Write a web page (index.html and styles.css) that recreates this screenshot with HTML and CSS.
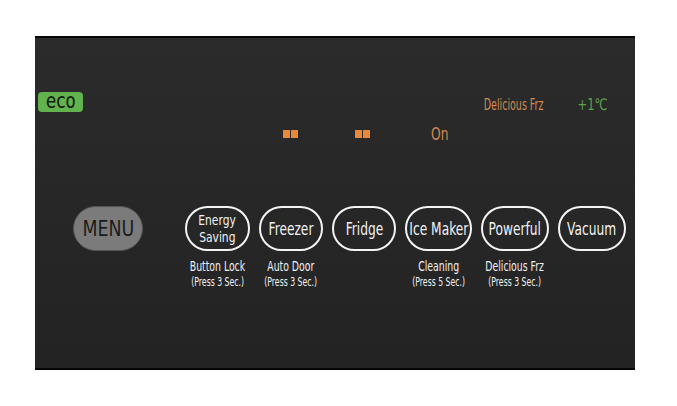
FILE: index.html
```html
<!DOCTYPE html>
<html lang="en">
  <head>
    <meta charset="UTF-8" />
    <title>Control Panel</title>
    <link rel="stylesheet" href="styles.css">
  </head>
  <body>
    <div class="panel">
      <div class="status-row">
        <span class="eco"><span class="cn">eco</span></span>
        <div class="status-right">
          <span class="status-mode cn">Delicious Frz</span>
          <span class="status-temp cn">+1&#8451;</span>
        </div>
      </div>

      <div class="indicator-row">
        <span class="dots"><i></i><i></i></span>
        <span class="dots"><i></i><i></i></span>
        <span class="on-text cn">On</span>
      </div>

      <div class="button-row">
        <div class="menu-btn"><span class="cn">MENU</span></div>
        <div class="keys">
          <div class="key-col" style="width: 65px">
            <div class="key key-two">
              <span class="cn">Energy</span>
              <span class="cn">Saving</span>
            </div>
            <div class="key-sub">
              <span class="cn">Button Lock</span>
              <small class="cn">(Press 3 Sec.)</small>
            </div>
          </div>
          <div class="key-col" style="width: 64px">
            <div class="key"><span class="cn">Freezer</span></div>
            <div class="key-sub">
              <span class="cn">Auto Door</span>
              <small class="cn">(Press 3 Sec.)</small>
            </div>
          </div>
          <div class="key-col" style="width: 64px">
            <div class="key"><span class="cn">Fridge</span></div>
          </div>
          <div class="key-col" style="width: 67px">
            <div class="key"><span class="cn">Ice Maker</span></div>
            <div class="key-sub">
              <span class="cn">Cleaning</span>
              <small class="cn">(Press 5 Sec.)</small>
            </div>
          </div>
          <div class="key-col" style="width: 68px">
            <div class="key"><span class="cn">Powerful</span></div>
            <div class="key-sub">
              <span class="cn">Delicious Frz</span>
              <small class="cn">(Press 3 Sec.)</small>
            </div>
          </div>
          <div class="key-col" style="width: 68px">
            <div class="key"><span class="cn">Vacuum</span></div>
          </div>
        </div>
      </div>
    </div>
  </body>
</html>
```

FILE: styles.css
```css
:root {
  --panel-bg: #2b2b2c;
  --panel-bottom: #232324;
  --edge: #050505;
  --eco-green: #62b24e;
  --eco-dark: #14200f;
  --orange: #e8893a;
  --tan: #d08a4f;
  --temp-green: #5ea24a;
  --key-line: #f4f4f4;
  --menu-bg: #7b7b7b;
}
* {
  box-sizing: border-box;
  margin: 0;
  padding: 0;
}
body {
  background: #fff;
  padding: 36px 0 0 35px;
  font-family: 'DejaVu Sans Condensed', 'Liberation Sans', sans-serif;
}
/* squeeze the wide fallback face toward the narrow panel lettering */
.cn {
  display: inline-block;
  transform: scaleX(0.8);
  white-space: nowrap;
}
.panel {
  width: 600px;
  height: 334px;
  background: linear-gradient(var(--panel-bg), var(--panel-bottom));
  border-top: 2px solid var(--edge);
  border-bottom: 2px solid var(--edge);
  padding: 54px 0 0 3px;
}
.status-row {
  display: flex;
  align-items: center;
  height: 20px;
}
.eco {
  display: flex;
  align-items: center;
  justify-content: center;
  width: 45px;
  height: 20px;
  background: var(--eco-green);
  border-radius: 4px;
  color: var(--eco-dark);
  font-family: 'DejaVu Sans Mono', monospace;
  font-size: 22px;
  line-height: 20px;
}
.eco .cn {
  transform: scaleX(0.8) translateY(-1px);
  letter-spacing: -1px;
}
.status-right {
  display: flex;
  align-items: center;
  margin-left: auto;
  margin-right: 28px;
  gap: 26px;
  padding-top: 4px;
}
.status-mode {
  color: var(--tan);
  font-size: 16px;
  transform: scaleX(0.66);
  transform-origin: right center;
}
.status-temp {
  color: var(--temp-green);
  font-size: 16px;
  transform-origin: right center;
}
.indicator-row {
  display: flex;
  align-items: center;
  height: 16px;
  margin-top: 14px;
  padding-left: 245px;
}
.dots {
  display: flex;
  gap: 1px;
  margin-right: 57px;
}
.dots i {
  width: 7px;
  height: 8px;
  background: var(--orange);
}
.on-text {
  color: var(--tan);
  font-size: 17px;
  margin-left: 4px;
  transform-origin: left center;
}
.button-row {
  display: flex;
  align-items: flex-start;
  margin-top: 64px;
  padding-left: 35px;
}
.menu-btn {
  width: 70px;
  height: 45px;
  border-radius: 23px;
  background: var(--menu-bg);
  border: 1px solid #555;
  color: #1b1b1b;
  font-size: 22px;
  line-height: 43px;
  text-align: center;
  margin-right: 42px;
}
.menu-btn .cn {
  transform: scaleX(0.88);
}
.keys {
  display: flex;
  gap: 9px;
}
.key-col {
  display: flex;
  flex-direction: column;
  align-items: center;
}
.key {
  width: 100%;
  height: 45px;
  border: 2.5px solid var(--key-line);
  border-radius: 23px;
  color: #f2f2f2;
  font-size: 17px;
  display: flex;
  align-items: center;
  justify-content: center;
  text-align: center;
}
.key-two {
  flex-direction: column;
  font-size: 14px;
  line-height: 17px;
}
.key-two .cn {
  transform: scaleX(0.85);
}
.key-sub {
  display: flex;
  flex-direction: column;
  align-items: center;
  margin-top: 7px;
  color: #f0f0f0;
  font-size: 14px;
  line-height: 17px;
}
.key-sub .cn {
  transform: scaleX(0.74);
}
.key-sub small.cn {
  font-size: 12px;
  line-height: 15px;
  transform: scaleX(0.72);
}
```
